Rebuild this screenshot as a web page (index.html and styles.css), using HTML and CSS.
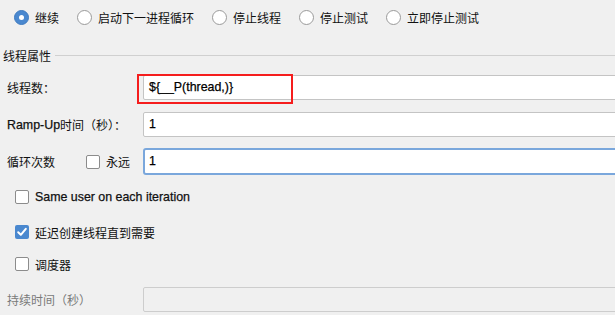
FILE: index.html
```html
<!DOCTYPE html>
<html lang="zh-CN">

<head>
    <meta charset="UTF-8">
    <meta name="viewport" content="width=device-width, initial-scale=1.0">
    <title>线程组</title>
    <link rel="stylesheet" href="styles.css">
</head>

<body>
    <div class="panel">
        <div class="actions">
            <label class="option"><span class="radio checked"></span>继续</label>
            <label class="option"><span class="radio"></span>启动下一进程循环</label>
            <label class="option"><span class="radio"></span>停止线程</label>
            <label class="option"><span class="radio"></span>停止测试</label>
            <label class="option"><span class="radio"></span>立即停止测试</label>
        </div>

        <div class="group-title">
            <span>线程属性</span>
            <span class="rule"></span>
        </div>

        <div class="row row-threads">
            <span class="label">线程数：</span>
            <div class="field">
                <div class="input latin">${__P(thread,)}</div>
                <div class="mark"></div>
            </div>
        </div>

        <div class="row row-ramp">
            <span class="label"><span class="latin">Ramp-Up</span>时间（秒）：</span>
            <div class="field">
                <div class="input latin">1</div>
            </div>
        </div>

        <div class="row row-loops">
            <span class="label">循环次数
                <span class="forever"><span class="box"></span>永远</span>
            </span>
            <div class="field">
                <div class="input input-focus latin">1</div>
            </div>
        </div>

        <div class="check-row check-same">
            <span class="box"></span><span class="latin">Same user on each iteration</span>
        </div>

        <div class="check-row check-delay">
            <span class="box checked">
                <svg width="14" height="14" viewBox="0 0 14 14">
                    <path d="M3.2 7.2 L5.8 9.8 L10.8 3.8" fill="none" stroke="#fff" stroke-width="2" stroke-linecap="round" stroke-linejoin="round" />
                </svg>
            </span>延迟创建线程直到需要
        </div>

        <div class="check-row check-scheduler">
            <span class="box"></span>调度器
        </div>

        <div class="row row-duration">
            <span class="label disabled">持续时间（秒）</span>
            <div class="field">
                <div class="input input-disabled"></div>
            </div>
        </div>
    </div>
</body>

</html>
```

FILE: styles.css
```css
body {
    margin: 0;
    background-color: #f0f0f0;
    font-family: "Noto Sans CJK SC", sans-serif;
    font-size: 12px;
    color: #111;
    overflow: hidden;
}

.panel {
    width: 615px;
    height: 315px;
}

.latin {
    font-family: "Liberation Sans", Arial, "Noto Sans CJK SC", sans-serif;
    font-size: 12.4px;
    -webkit-text-stroke: 0.25px currentColor;
}

/* radio row */
.actions {
    display: flex;
    align-items: center;
    gap: 18px;
    height: 34px;
    padding-left: 14px;
}

.option {
    display: flex;
    align-items: center;
    gap: 6px;
}

.radio {
    width: 13px;
    height: 13px;
    border: 1px solid #9a9a9a;
    border-radius: 50%;
    background-color: #fff;
    position: relative;
}

.radio.checked {
    background-color: #4a88cf;
    border-color: #3f7bc0;
}

.radio.checked::after {
    content: "";
    position: absolute;
    left: 4px;
    top: 4px;
    width: 5px;
    height: 5px;
    border-radius: 50%;
    background-color: #fff;
}

/* section header */
.group-title {
    display: flex;
    align-items: center;
    gap: 4px;
    height: 14px;
    margin-top: 14px;
    padding-left: 3px;
}

.group-title .rule {
    flex: 1;
    height: 1px;
    background-color: #d0d0d0;
}

/* form rows */
.row {
    display: flex;
    align-items: center;
}

.row-threads {
    margin-top: 13px;
}

.row-ramp {
    margin-top: 12px;
}

.row-loops {
    margin-top: 11px;
}

.row-duration {
    margin-top: 16px;
}

.label {
    display: flex;
    align-items: center;
    width: 143px;
    flex-shrink: 0;
    padding-left: 7px;
    box-sizing: border-box;
}

.label.disabled {
    color: #7a7a7a;
}

.forever {
    display: flex;
    align-items: center;
    gap: 6px;
    margin-left: 31px;
}

.field {
    flex: 1;
    position: relative;
    margin-right: -6px;
}

.input {
    height: 23px;
    line-height: 23px;
    padding-left: 5px;
    background-color: #fff;
    border: 1px solid #c4c4c4;
    border-radius: 2px;
    color: #000;
}

.input-focus {
    height: 23px;
    border: 2px solid #7aa7dc;
    border-radius: 3px;
    padding-left: 4px;
    line-height: 23px;
}

.input-disabled {
    background-color: #f0f0f0;
    border-color: #cdcdcd;
}

.mark {
    position: absolute;
    left: -6px;
    top: -1px;
    width: 152px;
    height: 26px;
    border: 2px solid #f51d1d;
}

/* checkboxes */
.check-row {
    display: flex;
    align-items: center;
    gap: 6px;
    height: 14px;
    padding-left: 15px;
}

.check-same {
    margin-top: 15px;
}

.check-delay {
    margin-top: 21px;
}

.check-scheduler {
    margin-top: 18px;
}

.box {
    width: 12px;
    height: 12px;
    border: 1px solid #8c8c8c;
    border-radius: 2px;
    background-color: #fff;
    flex-shrink: 0;
    position: relative;
}

.box.checked {
    width: 14px;
    height: 14px;
    border: none;
    background-color: #4a88cf;
}

.box svg {
    display: block;
}
```
